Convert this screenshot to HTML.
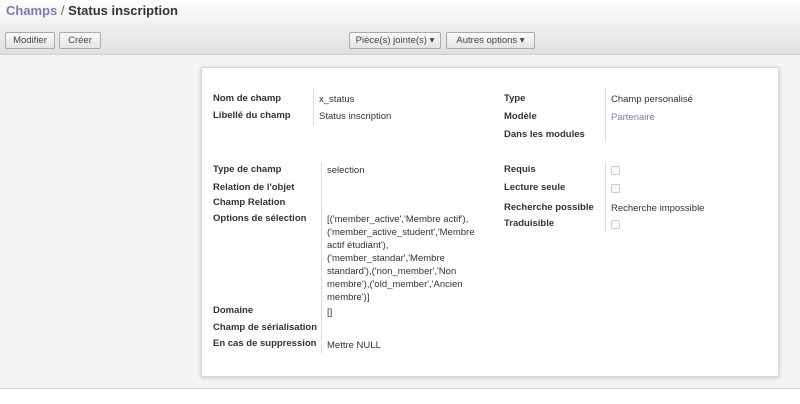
<!DOCTYPE html>
<html><head><meta charset="utf-8"><style>
*{margin:0;padding:0;box-sizing:border-box}
body{width:800px;height:404px;overflow:hidden;background:#f4f4f4;font-family:"Liberation Sans",sans-serif;color:#333;position:relative}
.hdr{position:absolute;left:0;top:0;width:800px;height:55px;background:linear-gradient(#fefefe,#e0e0e0);border-bottom:1px solid #cfcfcf}
.t{position:absolute;left:6px;top:3px;font-size:13px;font-weight:bold;color:#333}
.t span{color:#7c7bad}
.b{position:absolute;top:32px;height:17px;border:1px solid #aaa;border-radius:2px;background:linear-gradient(#fafafa,#e4e4e4);font-size:9.5px;color:#444;text-align:center;line-height:15px}
.sheet{position:absolute;left:201px;top:67px;width:578px;height:310px;background:#fff;border:1px solid #d8d8d8;box-shadow:0 1px 4px rgba(0,0,0,.2)}
.l,.v{position:absolute;font-size:9.5px;white-space:nowrap}
.l{font-weight:bold;color:#333}
.v{color:#333}
.vl{position:absolute;width:1px;background:#ddd}
.cb{position:absolute;width:9px;height:9px;border:1px solid #ccc;border-radius:2px;background:#fafafa}
.bot{position:absolute;left:0;top:388px;width:800px;height:16px;background:#fff;border-top:1px solid #ddd}
</style></head><body>
<div class="hdr">
<div class="t"><span>Champs</span> <span style="color:#666;font-weight:normal">/</span> Status inscription</div>
<div class="b" style="left:5px;width:50px">Modifier</div>
<div class="b" style="left:59px;width:42px">Créer</div>
<div class="b" style="left:349px;width:92px">Pièce(s) jointe(s) ▾</div>
<div class="b" style="left:446px;width:89px">Autres options ▾</div>
</div>
<div class="bot"></div>
<div class="sheet"></div>
<div class="vl" style="left:313px;top:89px;height:37px"></div>
<div class="vl" style="left:605px;top:89px;height:53px"></div>
<div class="vl" style="left:321px;top:162px;height:192px"></div>
<div class="vl" style="left:605px;top:162px;height:71px"></div>
<div class="l" style="left:213px;top:93px">Nom de champ</div>
<div class="l" style="left:213px;top:110px">Libellé du champ</div>
<div class="v" style="left:319px;top:94px">x_status</div>
<div class="v" style="left:319px;top:111px">Status inscription</div>
<div class="l" style="left:504px;top:93px">Type</div>
<div class="l" style="left:504px;top:111px">Modèle</div>
<div class="l" style="left:504px;top:129px">Dans les modules</div>
<div class="v" style="left:611px;top:94px">Champ personalisé</div>
<div class="v" style="left:611px;top:112px;color:#7c7bad">Partenaire</div>
<div class="l" style="left:213px;top:164px">Type de champ</div>
<div class="l" style="left:213px;top:182px">Relation de l'objet</div>
<div class="l" style="left:213px;top:197px">Champ Relation</div>
<div class="l" style="left:213px;top:213px">Options de sélection</div>
<div class="v" style="left:327px;top:165px">selection</div>
<div class="v" style="left:327px;top:213px;line-height:13px">[('member_active','Membre actif'),<br>('member_active_student','Membre<br>actif étudiant'),<br>('member_standar','Membre<br>standard'),('non_member','Non<br>membre'),('old_member','Ancien<br>membre')]</div>
<div class="l" style="left:213px;top:305px">Domaine</div>
<div class="l" style="left:213px;top:322px">Champ de sérialisation</div>
<div class="l" style="left:213px;top:338px">En cas de suppression</div>
<div class="v" style="left:327px;top:307px">[]</div>
<div class="v" style="left:327px;top:340px">Mettre NULL</div>
<div class="l" style="left:504px;top:164px">Requis</div>
<div class="l" style="left:504px;top:182px">Lecture seule</div>
<div class="l" style="left:504px;top:202px">Recherche possible</div>
<div class="l" style="left:504px;top:218px">Traduisible</div>
<div class="cb" style="left:611px;top:166px"></div>
<div class="cb" style="left:611px;top:184px"></div>
<div class="v" style="left:611px;top:203px">Recherche impossible</div>
<div class="cb" style="left:611px;top:220px"></div>
</body></html>
